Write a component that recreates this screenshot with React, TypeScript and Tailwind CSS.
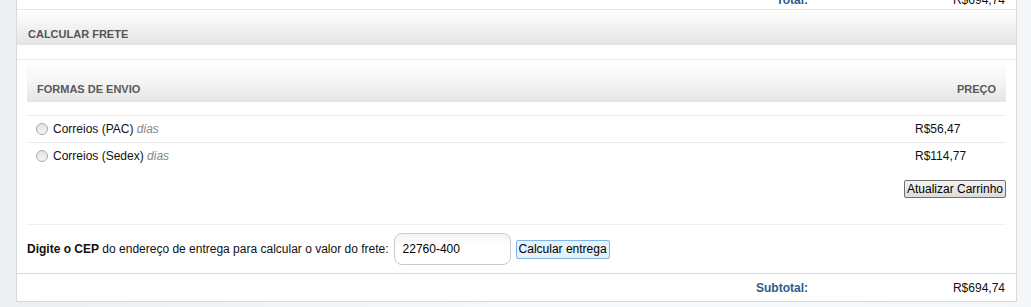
import { useState } from "react";

interface Envio { id: string; nome: string; preco: string; }

const envios: Envio[] = [
  { id: "pac", nome: "Correios (PAC)", preco: "R$56,47" },
  { id: "sedex", nome: "Correios (Sedex)", preco: "R$114,77" },
];

function Radio({ checked, onClick }: { checked: boolean; onClick: () => void }) {
  return (
    <button
      onClick={onClick}
      className="w-[12px] h-[12px] rounded-full border border-[#a9a9a9] bg-gradient-to-b from-[#e2e2e2] to-[#f6f6f6] flex items-center justify-center shrink-0"
    >
      {checked && <span className="w-[4px] h-[4px] rounded-full bg-[#333]" />}
    </button>
  );
}

export default function App() {
  const [envio, setEnvio] = useState("");
  const [cep, setCep] = useState("22760-400");

  return (
    <div className="h-[307px] bg-gradient-to-r from-[#eceef0] via-[#f7f8f9] to-[#f5f7f9] font-['Liberation_Sans',Arial,sans-serif] text-[12px] text-[#111] overflow-hidden">
      <div className="ml-[16px] w-[1001px] bg-white border-x border-b border-[#d3dbe1]">
        {/* total row, scrolled past the top edge */}
        <div className="h-[10px] border-b border-[#e4e7ea] overflow-hidden">
          <div className="flex justify-end pr-[11px] -mt-[7px] leading-[14px]">
            <span className="font-bold text-[#2d5b87]">Total:</span>
            <span className="w-[197px] text-right">R$694,74</span>
          </div>
        </div>

        <div className="h-[35px] bg-gradient-to-b from-white to-[#e4e4e4] pl-[11px] pt-[18px] leading-[13px] text-[11px] font-bold text-[#555]">
          CALCULAR FRETE
        </div>
        <div className="h-[15px] border-b border-[#ececec]" />

        <div className="mx-[10px]">
          <div className="h-[42px] bg-gradient-to-b from-white via-[#f5f5f5] to-[#e5e5e5] px-[10px] pt-[23px] leading-[13px] text-[11px] font-bold text-[#5a5a5a] flex justify-between">
            <span>FORMAS DE ENVIO</span>
            <span>PREÇO</span>
          </div>
          <div className="h-[14px] border-b border-[#ececec]" />

          {envios.map((e, i) => (
            <div
              key={e.id}
              className={`flex items-center ${i === 0 ? "h-[27px] border-b border-[#ececec]" : "h-[26px]"}`}
            >
              <div className="flex-1 flex items-center pl-[9px] gap-[5px]">
                <Radio checked={envio === e.id} onClick={() => setEnvio(e.id)} />
                <span>
                  {e.nome} <i className="text-[#888]">dias</i>
                </span>
              </div>
              <div className="w-[91px]">{e.preco}</div>
            </div>
          ))}

          <div className="h-[56px] border-b border-[#f0f0f0] pt-[11px] flex justify-end items-start">
            <button className="h-[18px] px-[2px] border border-[#707070] rounded-[2px] bg-gradient-to-b from-[#f2f2f2] to-[#dcdcdc] leading-[14px] text-black">
              Atualizar Carrinho
            </button>
          </div>

          <div className="h-[48px] flex items-center">
            <span>
              <b>Digite o CEP</b> do endereço de entrega para calcular o valor do frete:
            </span>
            <input
              value={cep}
              onChange={(e) => setCep(e.target.value)}
              className="ml-[5px] w-[117px] h-[32px] rounded-[8px] border border-[#c9c9c9] px-[8px] text-black bg-gradient-to-b from-[#f3f3f3] to-white to-[40%] outline-none"
            />
            <button className="ml-[5px] h-[19px] px-[2px] border border-[#7eb4ea] rounded-[2px] bg-[#e5f1fb] leading-[15px] text-black">
              Calcular entrega
            </button>
          </div>
        </div>

        <div className="h-[28px] border-t border-[#d3dbe1] flex items-center justify-end pr-[11px]">
          <span className="font-bold text-[#2d5b87]">Subtotal:</span>
          <span className="w-[197px] text-right">R$694,74</span>
        </div>
      </div>
    </div>
  );
}
